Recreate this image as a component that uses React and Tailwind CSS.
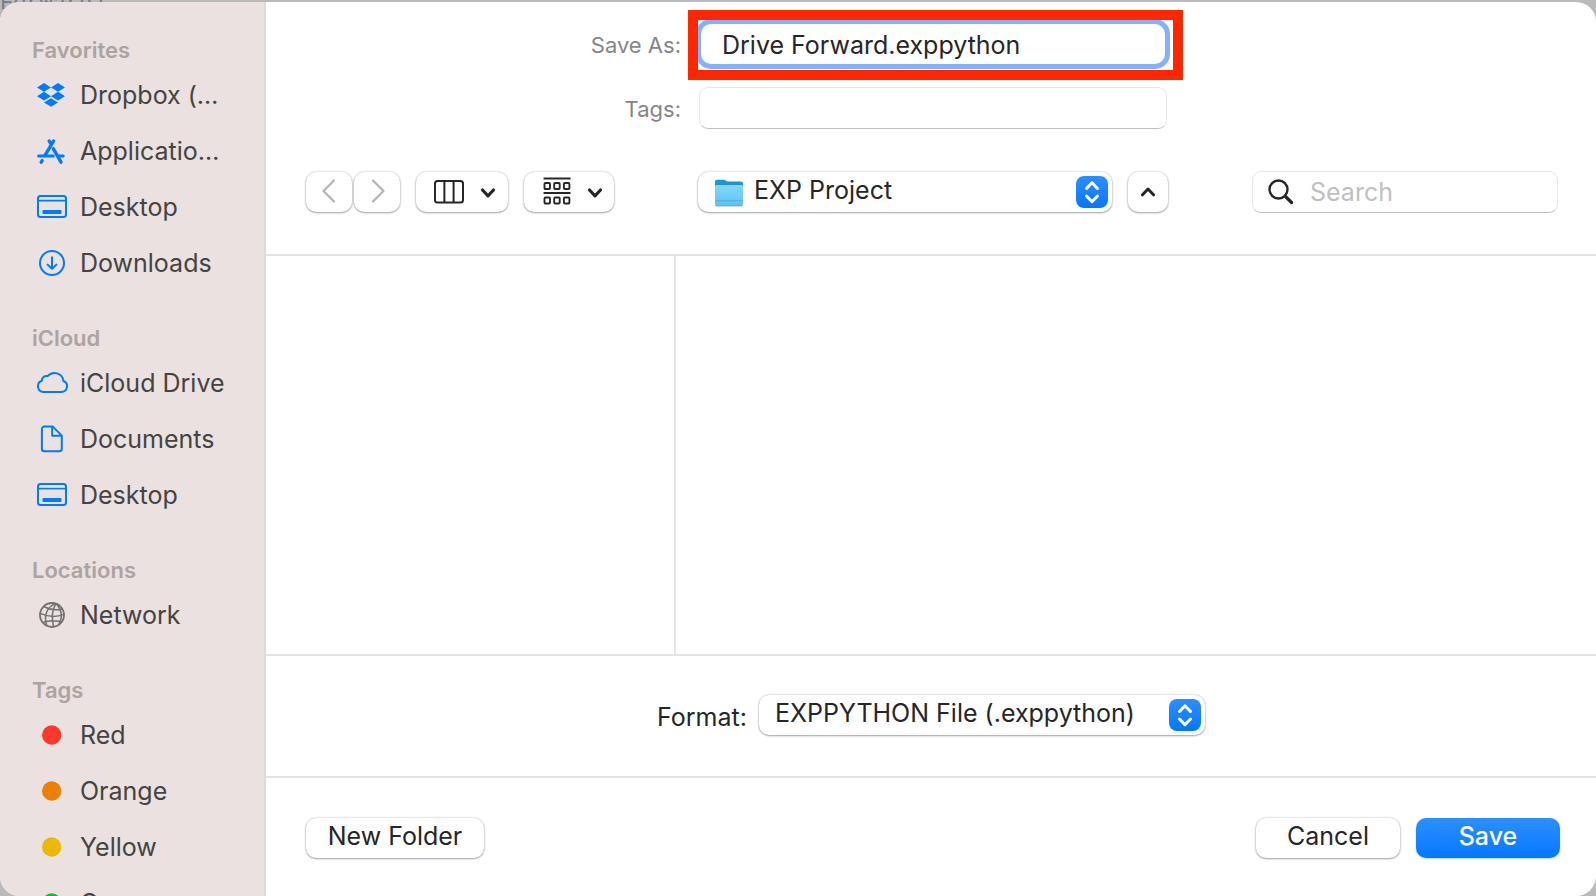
import React, { useState } from 'react';

const DropboxIcon = () => (
  <svg width="32" height="28" viewBox="1 0 32 28" fill="#007aff">
    <path d="M9 2l7 4.4-7 4.4-7-4.4zM23 2l7 4.4-7 4.4-7-4.4zM9 10.8l7 4.4-7 4.4-7-4.4zM23 10.8l7 4.4-7 4.4-7-4.4zM16 17.2l7 4.2-7 4.4-7-4.4z" />
  </svg>
);

const AppsIcon = () => (
  <svg width="32" height="28" viewBox="1 0 32 28" fill="none" stroke="#007aff" strokeWidth="3.4" strokeLinecap="round">
    <path d="M18.6 4L10 18.4M14.200 4l1.600 2.600M18.400 11.800l7.600 13.400M7.200 23.600l-1 1.600" />
    <path d="M3.600 18.900h14.600M23.600 18.900h4.600" strokeWidth="3" />
  </svg>
);

const DesktopIcon = () => (
  <svg width="32" height="28" viewBox="0 0 32 28" fill="none" stroke="#007aff" strokeWidth="2">
    <rect x="2" y="3" width="28" height="21" rx="2.5" />
    <path d="M2 7.6h28" strokeWidth="1.6" />
    <rect x="6.5" y="17" width="19" height="4" rx="1" fill="#007aff" stroke="none" />
  </svg>
);

const DownloadsIcon = () => (
  <svg width="32" height="28" viewBox="0 0 32 28" fill="none" stroke="#007aff" strokeWidth="2" strokeLinecap="round" strokeLinejoin="round">
    <circle cx="16" cy="14" r="12" />
    <path d="M16 8.2v11.4M11.6 15.6l4.4 4.2 4.4-4.2" />
  </svg>
);

const CloudIcon = () => (
  <svg width="32" height="28" viewBox="0 0 32 28" fill="none" stroke="#007aff" strokeWidth="2" strokeLinejoin="round">
    <path d="M7 23h18.200a5.700 5.700 0 0 0 2.200-11A9 9 0 0 0 11.600 7.200 4.600 4.600 0 0 0 5.800 11.800 5.800 5.800 0 0 0 7 23z" />
  </svg>
);

const DocumentIcon = () => (
  <svg width="32" height="28" viewBox="0 0 32 28" fill="none" stroke="#007aff" strokeWidth="2" strokeLinejoin="round">
    <path d="M8.4 1.4h8.2l9.2 9.2v13.2a2.5 2.5 0 0 1-2.5 2.5H8.4a2.5 2.5 0 0 1-2.5-2.5V3.9a2.5 2.5 0 0 1 2.5-2.5z" />
    <path d="M16.2 1.6v9.2h9.4" />
  </svg>
);

const NetworkIcon = () => (
  <svg width="32" height="28" viewBox="0 0 32 28" fill="none" stroke="#757070" strokeWidth="1.5">
    <circle cx="16" cy="14" r="12" strokeWidth="1.8" />
    <path d="M20 2.4C10.5 6 7.5 15 10.8 24.6M20 2.4C16 9 15.5 18 17.6 25.8M20 2.4C26 9 26.5 17 22.5 24M7.6 5.5C14 9 21 9.4 26.4 8M4.2 12.4C12 16 21 16 28 13.4M6.6 21.4C13 19.4 20 19.4 25.4 21" />
  </svg>
);

const TagDot = ({ color }) => (
  <svg width="32" height="28" viewBox="0 0 32 28">
    <circle cx="15.700" cy="14" r="9.700" fill={color} />
  </svg>
);

const sections = [
  {
    title: 'Favorites',
    items: [
      { label: 'Dropbox (…', icon: <DropboxIcon /> },
      { label: 'Applicatio…', icon: <AppsIcon /> },
      { label: 'Desktop', icon: <DesktopIcon /> },
      { label: 'Downloads', icon: <DownloadsIcon /> },
    ],
  },
  {
    title: 'iCloud',
    items: [
      { label: 'iCloud Drive', icon: <CloudIcon /> },
      { label: 'Documents', icon: <DocumentIcon /> },
      { label: 'Desktop', icon: <DesktopIcon /> },
    ],
  },
  {
    title: 'Locations',
    items: [{ label: 'Network', icon: <NetworkIcon /> }],
  },
  {
    title: 'Tags',
    items: [
      { label: 'Red', icon: <TagDot color="#ff382b" /> },
      { label: 'Orange', icon: <TagDot color="#ed8000" /> },
      { label: 'Yellow', icon: <TagDot color="#edb800" /> },
      { label: 'Green', icon: <TagDot color="#1db82c" /> },
    ],
  },
];

const Sidebar = () => (
  <nav className="w-[266px] shrink-0 overflow-hidden border-r-2 border-[#dedbdb] bg-[#eae1e0] pt-[31px]">
    {sections.map((section) => (
      <section key={section.title} className="mb-[30px]">
        <h2 className="h-[34px] pl-8 text-[22px] leading-[34px] font-semibold text-[#aca3a2]">{section.title}</h2>
        <ul>
          {section.items.map((item) => (
            <li key={item.label}>
              <a href="#" className="flex h-14 items-center gap-3 pl-9 text-[25px] text-[#454343]">
                <span className="shrink-0">{item.icon}</span>
                <span className="pt-0.5 whitespace-nowrap">{item.label}</span>
              </a>
            </li>
          ))}
        </ul>
      </section>
    ))}
  </nav>
);

// Blue up/down knob at the right end of a pop-up button
const Stepper = () => (
  <span className="pointer-events-none absolute top-1 right-1 h-8 w-8 rounded-[8px] bg-linear-to-b from-[#2b8fff] to-[#0077ff]">
    <svg width="32" height="32" viewBox="0 0 32 32" fill="none" stroke="#fff" strokeWidth="3" strokeLinecap="round" strokeLinejoin="round">
      <path d="M10.5 12.5l5.5-5.7 5.5 5.7M10.5 20l5.5 5.700 5.500-5.700" />
    </svg>
  </span>
);

const FolderIcon = () => (
  <svg className="pointer-events-none absolute top-[7px] left-4" width="30" height="28" viewBox="0 0 30 28">
    <defs>
      <linearGradient id="folder" x1="0" y1="0" x2="0" y2="1">
        <stop offset="0" stopColor="#84d7fc" />
        <stop offset="1" stopColor="#5fc3f0" />
      </linearGradient>
    </defs>
    <path d="M1 2.5A1.800 1.800 0 0 1 2.800.7h7.400c1.500 0 2 1.900 3.600 1.900h13.400A1.800 1.800 0 0 1 29 4.400V12H1z" fill="#1a94d2" />
    <rect x="1" y="6" width="28" height="20.500" rx="1.500" fill="url(#folder)" />
    <path d="M1 21.800h28" stroke="#4fb0dc" />
    <path d="M1.500 26.800h27" stroke="#4a97bb" />
  </svg>
);

const control = 'h-10 rounded-[10px] bg-white shadow-[0_0_2px_rgba(0,0,0,0.3),0_1px_2px_rgba(0,0,0,0.3)]';
const field = 'rounded-[9px] border border-[#e6e6e6] border-b-[#bdbdbd] bg-white';

const Chevron = () => (
  <svg className="mt-0.5" width="16" height="12" viewBox="0 0 16 12" fill="none" stroke="#262626" strokeWidth="3.2" strokeLinecap="round" strokeLinejoin="round">
    <path d="M2.500 3L8 8.800 13.500 3" />
  </svg>
);

const Toolbar = () => (
  <div className="grid grid-cols-[1fr_auto_1fr] items-center">
    <div className="flex items-center">
      <button type="button" aria-label="Back" className={`${control} flex w-[46px] items-center justify-center pb-0.5`}>
        <svg width="14" height="24" viewBox="0 0 14 24" fill="none" stroke="#b3b3b3" strokeWidth="2.2" strokeLinecap="round" strokeLinejoin="round">
          <path d="M12 1.500L1.500 12l10.500 10.500" />
        </svg>
      </button>
      <button type="button" aria-label="Forward" className={`${control} ml-0.5 flex w-[46px] items-center justify-center pb-0.5 pl-0.5`}>
        <svg width="14" height="24" viewBox="0 0 14 24" fill="none" stroke="#b3b3b3" strokeWidth="2.2" strokeLinecap="round" strokeLinejoin="round">
          <path d="M2 1.500L12.500 12 2 22.500" />
        </svg>
      </button>
      <button type="button" aria-label="View as columns" className={`${control} ml-4 flex w-[92px] items-center justify-center gap-4 pl-1.5`}>
        <svg width="30" height="24" viewBox="0 0 30 24" fill="none" stroke="#262626" strokeWidth="2">
          <rect x="1" y="1" width="28" height="21.500" rx="2.500" />
          <path d="M10.400 1v21.500M19.600 1v21.500" />
        </svg>
        <Chevron />
      </button>
      <button type="button" aria-label="Group items" className={`${control} ml-4 flex w-[90px] items-center justify-center gap-4 pl-2`}>
        <svg className="mb-0.5" width="28" height="28" viewBox="0 0 28 28" fill="none" stroke="#262626" strokeWidth="1.900">
          <path d="M.5 1.500h27M.5 16h27" />
          <rect x="1.500" y="6" width="5.500" height="6" rx="1" />
          <rect x="11.200" y="6" width="5.500" height="6" rx="1" />
          <rect x="20.900" y="6" width="5.500" height="6" rx="1" />
          <rect x="1.500" y="20.500" width="5.500" height="6" rx="1" />
          <rect x="11.200" y="20.500" width="5.500" height="6" rx="1" />
          <rect x="20.900" y="20.500" width="5.500" height="6" rx="1" />
        </svg>
        <Chevron />
      </button>
    </div>

    <div className="flex gap-4">
      <div className="relative">
        <FolderIcon />
        <select aria-label="Folder" className={`${control} block w-[414px] appearance-none pb-0.5 pl-14 text-[25px]`}>
          <option>EXP Project</option>
        </select>
        <Stepper />
      </div>
      <button type="button" aria-label="Collapse" className={`${control} flex w-10 items-center justify-center`}>
        <svg width="16" height="12" viewBox="0 0 16 12" fill="none" stroke="#262626" strokeWidth="3" strokeLinecap="round" strokeLinejoin="round">
          <path d="M2.500 8.800L8 3l5.500 5.800" />
        </svg>
      </button>
    </div>

    <label className={`${field} mr-0.5 ml-auto flex h-[42px] w-[306px] items-center gap-4 pl-[15px]`}>
      <svg className="shrink-0" width="26" height="26" viewBox="0 0 26 26" fill="none" stroke="#262626" strokeWidth="2.4" strokeLinecap="round">
        <circle cx="10.500" cy="10.500" r="9" />
        <path d="M17.500 17.500l6 6" strokeWidth="3.200" />
      </svg>
      <input type="search" placeholder="Search" aria-label="Search" className="w-full min-w-0 pt-0.5 text-[25px] outline-none placeholder:text-[#c0c0c0]" />
    </label>
  </div>
);

const App = () => {
  const [name, setName] = useState('Drive Forward.exppython');

  return (
    <div className="relative h-screen overflow-hidden bg-[#bababa] pt-0.5 font-['Inter','Liberation_Sans',sans-serif]">
      {/* Editor window showing through above the sheet */}
      <span aria-hidden="true" className="absolute -top-2 left-0 font-['Liberation_Mono',monospace] text-[22px] leading-6 text-[#777b87]">Forward)</span>

      <div className="relative flex h-full overflow-hidden rounded-[20px] bg-white text-[#262626]">
        <Sidebar />

        <main className="flex min-w-0 flex-1 flex-col">
          <header className="border-b-2 border-[#e4e4e4] pt-[22px] pr-9 pb-[41px] pl-10">
            <div className="mb-[42px] grid grid-cols-[1fr_468px_1fr] items-center gap-x-[18px] gap-y-[23px] text-[22px]">
              <label htmlFor="name" className="pt-0.5 text-right text-[#858585]">Save As:</label>
              <div className="relative px-0.5">
                <input
                  id="name"
                  value={name}
                  onChange={(e) => setName(e.target.value)}
                  className="block h-10 w-full rounded-[10px] bg-white pt-0.5 pl-[21px] text-[25px] ring-[5px] ring-[#82b2ff] outline-none"
                />
                <div className="pointer-events-none absolute -top-3.5 -right-4 -bottom-4 -left-[11px] border-10 border-[#ff2600]" />
              </div>
              <label htmlFor="tags" className="col-start-1 pt-0.5 text-right text-[#858585]">Tags:</label>
              <input id="tags" className={`${field} h-[42px] px-5 outline-none`} />
            </div>
            <Toolbar />
          </header>

          <div className="flex flex-1">
            <div className="w-[410px] border-r-2 border-[#e4e4e4]" />
            <div className="flex-1" />
          </div>

          <div className="flex items-center justify-center gap-3 border-y-2 border-[#e4e4e4] pt-[39px] pr-9 pb-[41px] pl-9 text-[25px]">
            <label htmlFor="format" className="pt-1 leading-9">Format:</label>
            <div className="relative">
              <select id="format" className={`${control} block w-[446px] appearance-none pb-0.5 pl-4`}>
                <option>EXPPYTHON File (.exppython)</option>
              </select>
              <Stepper />
            </div>
          </div>

          <footer className="flex gap-4 pt-10 pr-9 pb-[38px] pl-10 text-[25px]">
            <button type="button" className={`${control} mr-auto w-[178px] pb-0.5`}>New Folder</button>
            <button type="button" className={`${control} w-36 pb-0.5`}>Cancel</button>
            <button type="button" className="h-10 w-36 rounded-[10px] bg-linear-to-b from-[#2b8fff] to-[#0077ff] pb-0.5 font-medium text-white shadow-[0_1px_2px_rgba(0,122,255,0.3)]">Save</button>
          </footer>
        </main>
      </div>
    </div>
  );
};

export default App;
